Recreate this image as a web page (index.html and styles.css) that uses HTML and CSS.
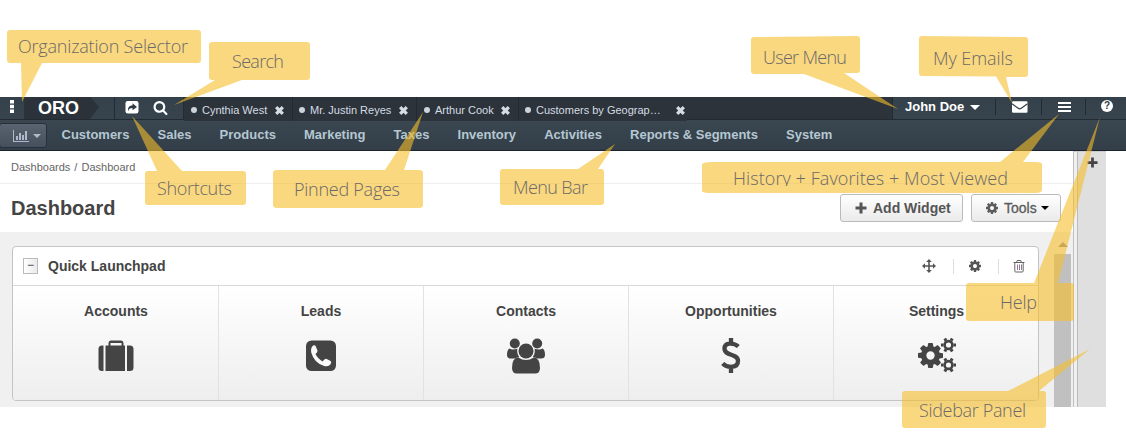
FILE: index.html
```html
<!DOCTYPE html>
<html lang="en">
<head>
<meta charset="utf-8">
<title>Dashboard</title>
<link rel="stylesheet" href="styles.css">
</head>
<body>
<svg class="defs" width="0" height="0">
  <symbol id="cog" viewBox="128 128 1536 1536"><path d="M1152 896q0-106-75-181t-181-75-181 75-75 181 75 181 181 75 181-75 75-181zm512-109v222q0 12-8 23t-20 13l-185 28q-19 54-39 91 35 50 107 138 10 12 10 25t-9 23q-27 37-99 108t-94 71q-12 0-26-9l-138-108q-44 23-91 38-16 136-29 186-7 28-36 28h-222q-14 0-24.5-8.5t-11.5-21.5l-28-184q-49-16-90-37l-141 107q-10 9-25 9-14 0-25-11-126-114-165-168-7-10-7-23 0-12 8-23 15-21 51-66.5t54-70.5q-27-50-41-99l-183-27q-13-2-21-12.5t-8-23.5v-222q0-12 8-23t19-13l186-28q14-46 39-92-40-57-107-138-10-12-10-24 0-10 9-23 26-36 98.5-107.5t94.5-71.5q13 0 26 10l138 107q44-23 91-38 16-136 29-186 7-28 36-28h222q14 0 24.5 8.5t11.5 21.5l28 184q49 16 90 37l142-107q9-9 24-9 13 0 25 10 129 119 165 170 7 8 7 22 0 12-8 23-15 21-51 66.5t-54 70.5q26 50 41 98l183 28q13 2 21 12.5t8 23.5z"/></symbol>
  <symbol id="close" viewBox="0 0 10 10"><path d="M2 2 8 8M8 2 2 8" stroke="currentColor" stroke-width="3"/></symbol>
  <symbol id="minigear" viewBox="-8 -8 16 16"><circle r="3.9" fill="none" stroke="currentColor" stroke-width="2.6"/><path d="M5-1.5h2.5v3H5zM-7.5-1.5H-5v3h-2.5z"/><path d="M5-1.5h2.5v3H5zM-7.5-1.5H-5v3h-2.5z" transform="rotate(60)"/><path d="M5-1.5h2.5v3H5zM-7.5-1.5H-5v3h-2.5z" transform="rotate(120)"/></symbol>
</svg>

<div class="app">
  <header class="header">
    <div class="topbar">
      <div class="org"><svg width="4" height="13" viewBox="0 0 4 13"><path d="M0 0h4v3.4H0zM0 4.8h4v3.4H0zM0 9.6h4V13H0z"/></svg></div>
      <div class="logo">ORO</div>
      <div class="quick">
        <svg width="14" height="13" viewBox="0 0 14 13"><rect x=".5" width="13" height="12.5" rx="2.2"/><path d="M3.2 10.2C2.4 6.500 4.500 4.500 7.500 4.500V2.200L12 5.900 7.500 9.300V7C5 7 3.800 8 3.200 10.200z" fill="#2f3a42"/></svg>
        <svg width="15" height="15" viewBox="0 0 1792 1792"><path d="M1216 832q0-185-131.500-316.500t-316.500-131.500-316.500 131.500-131.500 316.500 131.500 316.500 316.500 131.500 316.500-131.500 131.500-316.500zm512 832q0 52-38 90t-90 38q-54 0-90-38l-343-342q-179 124-399 124-143 0-273.500-55.500t-225-150-150-225-55.500-273.500 55.500-273.500 150-225 225-150 273.500-55.500 273.500 55.500 225 150 150 225 55.500 273.500q0 220-124 399l343 343q37 37 37 90z"/></svg>
      </div>
      <div class="tabs">
        <div class="tab tab-1"><i></i><span>Cynthia West</span><svg width="11" height="11"><use href="#close"/></svg></div>
        <div class="tab tab-2"><i></i><span>Mr. Justin Reyes</span><svg width="11" height="11"><use href="#close"/></svg></div>
        <div class="tab tab-3"><i></i><span>Arthur Cook</span><svg width="11" height="11"><use href="#close"/></svg></div>
        <div class="tab tab-4"><i></i><span>Customers by Geograp…</span><svg width="11" height="11"><use href="#close"/></svg></div>
      </div>
      <div class="user">John Doe<b class="caret"></b></div>
      <div class="tool mail"><svg width="16" height="12" viewBox="0 0 16 12"><rect y=".3" width="15.500" height="11.500" rx="1.200"/><path d="M0 2.800 6.200 7.300Q7.750 8.500 9.300 7.300L15.500 2.800" fill="none" stroke="#35414a" stroke-width="1.200"/></svg></div>
      <div class="tool bars"><svg width="13" height="10" viewBox="0 0 13 10"><path d="M0 0h13v2H0zM0 4h13v2H0zM0 8h13v2H0z"/></svg></div>
      <div class="tool help"><span>?</span></div>
    </div>
    <nav class="menu">
      <div class="dash"><svg width="16" height="12" viewBox="0 0 16 12"><path d="M0 0h1v11h15v1H0zM3 6h2v4H3zM6 3h2v7H6zM9 5h2v5H9zM12 1h2v9h-2z"/></svg><b class="caret"></b></div>
      <a>Customers</a><a>Sales</a><a>Products</a><a>Marketing</a><a>Taxes</a><a>Inventory</a><a>Activities</a><a>Reports &amp; Segments</a><a>System</a>
    </nav>
  </header>

  <div class="body">
    <main class="main">
      <div class="crumbs">Dashboards / Dashboard</div>
      <div class="title">
        <h1>Dashboard</h1>
        <button class="btn add"><svg width="12" height="12" viewBox="0 0 12 12"><path d="M4.500 .5h3v4h4v3h-4v4h-3v-4h-4v-3h4z"/></svg>Add Widget</button>
        <button class="btn tools"><svg width="12" height="12"><use href="#cog"/></svg>Tools<b class="caret"></b></button>
      </div>
      <div class="content">
        <section class="widget">
          <div class="whead">
            <span class="fold">−</span><h2>Quick Launchpad</h2>
            <div class="wact move"><svg width="14" height="14" viewBox="0 0 14 14"><path d="M7 0 9.800 3H7.800V6.200H11V4.200L14 7 11 9.800V7.800H7.800V11H9.800L7 14 4.200 11H6.200V7.800H3V9.800L0 7 3 4.200V6.200H6.200V3H4.200z"/></svg></div>
            <div class="wact gear"><svg width="12" height="12"><use href="#cog"/></svg></div>
            <div class="wact trash"><svg width="12" height="13" viewBox="0 0 12 13"><g fill="none" stroke="#666"><path d="M.5 2.500h11M3.500 2.500l.7-2h3.600l.7 2M1.800 2.500v8.500q0 1 1 1h6.400q1 0 1-1v-8.500"/><path d="M4.500 4.500v5.500M6.500 4.500v5.500M8.500 4.500v5.500" stroke="#85668e" stroke-width=".9"/></g></svg></div>
          </div>
          <div class="launch">
            <div class="cell"><h3>Accounts</h3><svg width="40" height="36" viewBox="0 0 40 36"><path d="M6 8.500h1.500v25.500H6q-3.500 0-3.500-3.500V12q0-3.500 3.500-3.500zM9.500 8.500h3V6q0-2.500 2.300-2.500h10.400Q27.500 3.500 27.500 6v2.500H29v25.500H9.500zM14.500 6v2.500h11V6zM31 8.500h3q3.500 0 3.500 3.500v18.500q0 3.500-3.500 3.500h-3z" fill-rule="evenodd"/></svg></div>
            <div class="cell"><h3>Leads</h3><svg width="40" height="36" viewBox="0 0 40 36"><rect x="5" y="3.500" width="30" height="30.500" rx="5.500"/><path d="M12.200 8.600Q14.300 7.700 14.900 9.800L16.500 13.500Q16.800 15 14.500 17 16.500 21.500 21.500 24.400 24 21.200 25.700 22L29.600 24.100Q30.800 25 29.600 27.300 27.500 30 23.200 29 13.200 26 10.300 15.700 9.300 11 12.200 8.600z" fill="#fafafa"/></svg></div>
            <div class="cell"><h3>Contacts</h3><svg width="40" height="36" viewBox="0 0 40 36"><circle cx="8.800" cy="6.500" r="5"/><circle cx="31.200" cy="6.500" r="5"/><path d="M3.500 11.500Q6 13.300 11.400 11.800 10.500 17 13.200 20Q10 20.500 8.500 21.600H5Q1 21.500 1 18 1 12.500 3.500 11.500zM36.500 11.500Q34 13.300 28.600 11.800 29.500 17 26.800 20 30 20.500 31.500 21.600H35Q39 21.500 39 18 39 12.500 36.500 11.500zM12.200 20.500Q20 25.500 27.800 20.500 34 20.500 34 31 34 36.500 29 36.500H11Q6 36.500 6 31 6 20.500 12.200 20.500z"/><circle cx="20" cy="14" r="7.500"/></svg></div>
            <div class="cell"><h3>Opportunities</h3><svg width="40" height="36" viewBox="0 0 40 36"><path d="M27.300 9.500C23 5.500 13.500 5 13.500 11.500 13.500 19.500 27 16 27 24 27 31.500 16 31 11.700 26.500M20 1v5.500M20 30.500V36" fill="none" stroke="#444" stroke-width="4.300"/></svg></div>
            <div class="cell"><h3>Settings</h3><svg width="40" height="36" viewBox="0 0 40 36"><use href="#cog" x="1" y="6" width="25" height="25"/><use href="#minigear" x="23.500" y="0" width="16" height="16"/><use href="#minigear" x="23.500" y="20" width="16" height="16"/></svg></div>
          </div>
        </section>
        <div class="scroll"><i></i></div>
      </div>
    </main>
    <aside class="side"><svg width="11" height="11" viewBox="0 0 12 12"><path d="M4.500 .5h3v4h4v3h-4v4h-3v-4h-4v-3h4z"/></svg></aside>
  </div>
</div>

<svg class="callouts" width="1126" height="439" viewBox="0 0 1126 439">
  <clipPath id="line"><path d="M702 162h340v24H702z"/></clipPath>
  <g class="bubble">
    <path d="M10 30H198q3 0 3 3V60q0 3-3 3H42L22 102 21 63H10q-3 0-3-3V33q0-3 3-3z"/>
    <path d="M212 42H307q3 0 3 3V77q0 3-3 3H242L174 105 215 80H212q-3 0-3-3V45q0-3 3-3z"/>
    <path d="M148 171H157L132 116 182 171H243q3 0 3 3V202q0 3-3 3H148q-3 0-3-3V174q0-3 3-3z"/>
    <path d="M277 170H385L423 112 404 170H419q4 0 4 3V205q0 3-4 3H277q-4 0-4-3V173q0-3 4-3z"/>
    <path d="M503 169H578L615 144 598 169H601q3 0 3 3V202q0 3-3 3H503q-3 0-3-3V172q0-3 3-3z"/>
    <path d="M754 37 857 36q3 0 3 3V70q0 3-3 3H844L898 109 804 74H754q-3 0-3-3V40q0-3 3-3z"/>
    <path d="M922 36 1025 37q3 0 3 3V74q0 3-3 3H1006L1012 103 996 76.500 922 76q-3 0-3-3V39q0-3 3-3z"/>
    <path d="M712 162H1000L1059 114 1023 162H1035Q1042 162 1042 164V190Q1042 193 1035 193H712Q702 193 702 191V164Q704 162 712 162z"/>
    <path d="M969 283H1034L1100 117 1058 283H1071q3 0 3 3V318q0 3-3 3H969q-3 0-3-3V286q0-3 3-3z"/>
    <path d="M905 391H1008L1090 349 1039 391H1043q3 0 3 3V425q0 3-3 3H905q-3 0-3-3V394q0-3 3-3z"/>
  </g>
  <g class="note">
    <text x="18" y="53" textLength="170">Organization Selector</text>
    <text x="232" y="68" textLength="52">Search</text>
    <text x="157" y="195" textLength="75">Shortcuts</text>
    <text x="294" y="196" textLength="106">Pinned Pages</text>
    <text x="513" y="194" textLength="75">Menu Bar</text>
    <text x="763" y="64" textLength="84">User Menu</text>
    <text x="933" y="65" textLength="80">My Emails</text>
    <text x="733" y="185" textLength="275" clip-path="url(#line)">History + Favorites + Most Viewed</text>
    <text x="1000" y="309" textLength="37">Help</text>
    <text x="919" y="417" textLength="107">Sidebar Panel</text>
  </g>
</svg>
</body>
</html>
```
FILE: styles.css
```css
* { box-sizing: border-box; }
body { margin: 0; padding-top: 97px; height: 439px; overflow: hidden; background: #fff; font-family: "Liberation Sans", Arial, sans-serif; color: #444; }
svg { display: block; fill: currentColor; flex: none; }
.defs { position: absolute; }
h1, h2, h3 { margin: 0; }
.caret { display: inline-block; border: 4px solid transparent; border-top-color: currentColor; border-bottom: 0; }

.header { height: 54px; background: #35414b; border-bottom: 1px solid #1b2330; }
.topbar { display: flex; height: 23px; color: #fff; background: linear-gradient(#35414a, #37444e); border-bottom: 1px solid #222b33; }
.org { width: 24px; padding: 3px 0 0 10px; }
.logo { width: 75px; padding-left: 14px; background: #2b323a; clip-path: polygon(0 0, 66px 0, 75px 10px, 66px 22px, 0 22px); font: bold 18px/23px "Liberation Sans", Arial, sans-serif; }
.quick { display: flex; gap: 14px; margin-left: 15px; width: 70px; padding: 4px 0 0 10px; border-left: 1px solid #222b33; border-right: 1px solid #222b33; }
.quick svg + svg { margin-top: -1px; }
.tabs { display: flex; width: 708px; background: #2c333b; font-size: 11px; color: #d5dce2; }
.tab { display: flex; align-items: center; height: 24px; padding: 3px 0 0 7px; background: #2c333b; border-right: 1px solid #222931; }
.tab i { width: 6px; height: 6px; margin: -2px 5px 0 0; border-radius: 50%; background: #ccd3da; }
.tab span { margin-top: -2px; }
.tab svg { margin: -1px 7px 0 auto; }
.tab-1 { width: 109px; }
.tab-2 { width: 124px; padding-left: 6px; }
.tab-3 { width: 102px; }
.tab-4 { width: 168px; padding-left: 6px; border: 0; }
.tab-4 svg { margin-right: 1px; }
.user { display: flex; align-items: center; width: 103px; padding: 0 0 3px 12px; border-left: 1px solid #222b33; font-size: 13px; font-weight: bold; }
.user .caret { margin: 2px 0 0 6px; border-width: 5px 5px 0; }
.tool { height: 16px; margin-top: 2px; border-left: 1px solid #222b33; }
.mail { width: 46px; padding: 2px 0 0 16px; }
.bars { width: 44px; padding: 3px 0 0 16px; }
.help { padding: 1px 0 0 15px; }
.help span { display: block; width: 12px; height: 12px; border-radius: 50%; background: #fff; color: #2f3a43; font: bold 10px/12px "Liberation Sans", Arial, sans-serif; text-align: center; }
.menu { display: flex; height: 30px; background: linear-gradient(#3a4750, #333e48); color: #b5c7d2; font-size: 13px; font-weight: bold; line-height: 29px; }
.menu a { margin-right: 28.100px; white-space: nowrap; }
.dash { display: flex; align-items: center; gap: 4px; width: 48px; height: 25px; margin: 3px 14.500px 0 -1px; padding-left: 13px; border: 1px solid #27303a; border-radius: 3px; background: linear-gradient(#5a6470, #454f5d); color: #b0b8cb; }

.body { display: flex; height: 256px; }
.main { width: 1073px; }
.crumbs { height: 33px; padding-left: 11px; border-bottom: 1px solid #eee; font-size: 11px; line-height: 33px; word-spacing: 1px; color: #666; }
.title { display: flex; align-items: center; height: 48px; padding: 0 12px 0 11px; }
.title h1 { margin-right: auto; font-size: 20px; line-height: 24px; }
.btn { display: flex; align-items: center; height: 28px; padding: 0 0 1px 14px; border: 1px solid #bbb; border-radius: 3px; background: linear-gradient(#fff, #eaeaea); color: #555; font: bold 14px "Liberation Sans", Arial, sans-serif; }
.add { width: 123px; gap: 6px; margin-right: 8px; }
.tools { width: 90px; gap: 6px; color: #5c5c5c; font-weight: normal; -webkit-text-stroke: .3px #5c5c5c; }
.tools .caret { margin-left: -2px; color: #000; }
.content { display: flex; height: 175px; padding: 14px 2px 0 12px; background: #f0f0f0; }
.widget { width: 1027px; height: 155px; border: 1px solid #c4c4c4; border-radius: 4px; background: #fff; overflow: hidden; }
.whead { display: flex; align-items: center; height: 39px; padding-left: 10px; border-bottom: 1px solid #d9d9d9; }
.whead h2 { margin: 0 auto 0 10px; font-size: 14px; }
.fold { width: 15px; height: 16px; border: 1px solid #bbb; background: linear-gradient(90deg, #fff, #eaeaea); font-size: 12px; line-height: 13px; text-align: center; }
.wact { display: flex; align-items: center; justify-content: center; width: 45px; height: 15px; border-left: 1px solid #ddd; color: #555; }
.move { width: 48px; border: 0; }
.gear { padding-right: 3px; }
.trash { width: 40px; }
.launch { display: grid; grid-template-columns: repeat(5, 205px); height: 114px; padding-left: 1px; background: linear-gradient(#fff, #eee); }
.cell { display: flex; flex-direction: column; align-items: center; border-right: 1px solid #e2e2e2; color: #444; }
.cell:last-child { border: 0; }
.cell h3 { margin: 17px 0 17px; font-size: 14px; line-height: 17px; }
.cell svg { overflow: visible; }
.scroll { width: 17px; margin: -4px 0 0 15px; }
.scroll::before { content: ""; display: block; width: 0; margin: 0 auto 7px; border: 5px solid transparent; border-top: 0; border-bottom-color: #888; }
.scroll i { display: block; height: 153px; background: #c0c0c0; }
.side { width: 33px; border-left: 1px solid #c0c0c0; background: linear-gradient(90deg, #f0f0f0 3px, #bbb 3px, #bbb 4px, #dfdfdf 4px); box-shadow: inset 0 1px #ccc; padding: 6px 0 0 13px; }

.callouts { position: absolute; left: 0; top: 0; }
.bubble { fill: rgba(245, 190, 43, .6); }
.note { fill: #6c6967; font-family: "Open Sans", "Noto Sans", sans-serif; font-size: 18px; font-weight: 300; }
```
